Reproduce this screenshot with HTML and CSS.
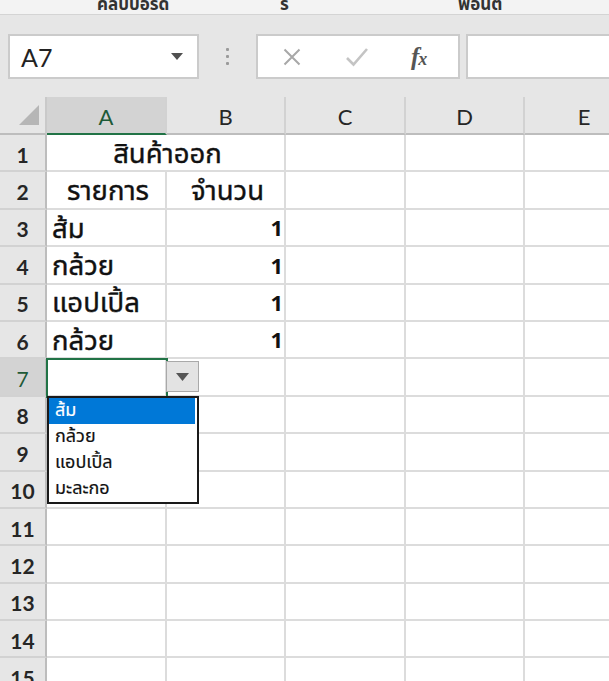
FILE: index.html
```html
<!DOCTYPE html>
<html lang="th">
<head>
<meta charset="utf-8">
<link rel="stylesheet" href="styles.css">
</head>
<body>
<div class="app">
  <div class="ribbon">
    <span class="grp g1">คลิปบอร์ด</span>
    <span class="grp g2">ร</span>
    <span class="grp g3">ฟอนต์</span>
  </div>
  <div class="fbar">
    <div class="namebox">
      <span class="ref">A7</span>
      <svg class="caret" width="12" height="7" viewBox="0 0 12 7"><path d="M0 0H12L6 7Z" fill="#505050"/></svg>
    </div>
    <div class="dots"><i></i><i></i><i></i></div>
    <div class="fbtns">
      <svg class="ic-x" width="18" height="18" viewBox="0 0 18 18"><path d="M1.5 1.5L16.5 16.5M16.5 1.5L1.5 16.5" stroke="#a8a8a8" stroke-width="2" fill="none"/></svg>
      <svg class="ic-ok" width="24" height="20" viewBox="0 0 24 20"><path d="M2 11L8.5 17.5L22 2" stroke="#c4c4c4" stroke-width="2.6" fill="none"/></svg>
      <span class="fx">f<span class="x">x</span></span>
    </div>
    <div class="finput"></div>
  </div>
  <div class="sheet">
    <div class="grid">
      <div class="corner"><span class="tri"></span></div>
      <div class="ch sel">A</div>
      <div class="ch">B</div>
      <div class="ch">C</div>
      <div class="ch">D</div>
      <div class="ch">E</div>

      <div class="rh">1</div>
      <div class="c merged center">สินค้าออก</div>
      <div class="c"></div><div class="c"></div><div class="c"></div>

      <div class="rh">2</div>
      <div class="c center">รายการ</div>
      <div class="c center">จำนวน</div>
      <div class="c"></div><div class="c"></div><div class="c"></div>

      <div class="rh">3</div>
      <div class="c">ส้ม</div>
      <div class="c num">1</div>
      <div class="c"></div><div class="c"></div><div class="c"></div>

      <div class="rh">4</div>
      <div class="c">กล้วย</div>
      <div class="c num">1</div>
      <div class="c"></div><div class="c"></div><div class="c"></div>

      <div class="rh">5</div>
      <div class="c">แอปเปิ้ล</div>
      <div class="c num">1</div>
      <div class="c"></div><div class="c"></div><div class="c"></div>

      <div class="rh">6</div>
      <div class="c">กล้วย</div>
      <div class="c num">1</div>
      <div class="c"></div><div class="c"></div><div class="c"></div>

      <div class="rh sel">7</div>
      <div class="c active"></div>
      <div class="c"></div><div class="c"></div><div class="c"></div><div class="c"></div>

      <div class="rh">8</div>
      <div class="c"></div><div class="c"></div><div class="c"></div><div class="c"></div><div class="c"></div>
      <div class="rh">9</div>
      <div class="c"></div><div class="c"></div><div class="c"></div><div class="c"></div><div class="c"></div>
      <div class="rh">10</div>
      <div class="c"></div><div class="c"></div><div class="c"></div><div class="c"></div><div class="c"></div>
      <div class="rh">11</div>
      <div class="c"></div><div class="c"></div><div class="c"></div><div class="c"></div><div class="c"></div>
      <div class="rh">12</div>
      <div class="c"></div><div class="c"></div><div class="c"></div><div class="c"></div><div class="c"></div>
      <div class="rh">13</div>
      <div class="c"></div><div class="c"></div><div class="c"></div><div class="c"></div><div class="c"></div>
      <div class="rh">14</div>
      <div class="c"></div><div class="c"></div><div class="c"></div><div class="c"></div><div class="c"></div>
      <div class="rh">15</div>
      <div class="c"></div><div class="c"></div><div class="c"></div><div class="c"></div><div class="c"></div>
    </div>

    <div class="dd-btn"><svg width="13" height="8" viewBox="0 0 13 8"><path d="M0 0H13L6.5 8Z" fill="#555"/></svg></div>
    <ul class="dd-list">
      <li class="hi">ส้ม</li>
      <li>กล้วย</li>
      <li>แอปเปิ้ล</li>
      <li>มะละกอ</li>
    </ul>
  </div>
</div>
</body>
</html>
```

FILE: styles.css
```css
* { box-sizing: border-box; }
html, body { margin: 0; padding: 0; }
body {
  width: 609px;
  height: 681px;
  overflow: hidden;
  background: #e6e6e6;
  font-family: "Tahoma", "Leelawadee UI", "Noto Sans Thai", "DejaVu Sans", "Noto Sans", sans-serif;
}
.app { width: 609px; height: 681px; overflow: hidden; }

.ribbon {
  height: 15px;
  background: #f3f3f3;
  border-bottom: 1px solid #d4d4d4;
  overflow: hidden;
  display: flex;
  align-items: flex-start;
  padding-left: 97px;
}
.grp {
  font-size: 17px;
  line-height: 20px;
  margin-top: -5px;
  color: #333;
  font-weight: bold;
  white-space: nowrap;
}
.g1 { width: 183px; }
.g2 { width: 178px; }

.fbar {
  display: flex;
  align-items: stretch;
  height: 45px;
  margin-top: 19px;
  padding-left: 8px;
}
.namebox {
  width: 191px;
  background: #fff;
  border: 2px solid #cbcbcb;
  display: flex;
  align-items: center;
  justify-content: space-between;
  padding: 0 14px 0 11px;
}
.ref {
  font-family: "Lato", "Liberation Sans", sans-serif;
  font-size: 25px;
  color: #222;
}
.dots {
  width: 57px;
  display: flex;
  flex-direction: column;
  align-items: center;
  justify-content: center;
  gap: 4px;
}
.dots i {
  display: block;
  width: 3px;
  height: 3px;
  background: #9a9a9a;
  border-radius: 1px;
}
.fbtns {
  width: 204px;
  background: #fff;
  border: 2px solid #cbcbcb;
  display: flex;
  align-items: center;
  padding-left: 25px;
}
.ic-x { margin-right: 44px; }
.ic-ok { margin-right: 42px; }
.fx {
  font-family: "Liberation Serif", "DejaVu Serif", serif;
  font-style: italic;
  font-weight: bold;
  font-size: 25px;
  line-height: 1;
  color: #555;
}
.fx .x { font-size: 18px; margin-left: -1px; }
.finput {
  flex: 1;
  margin-left: 6px;
  margin-right: -20px;
  background: #fff;
  border: 2px solid #cbcbcb;
}

.sheet {
  position: relative;
  margin-top: 18px;
}
.grid {
  display: grid;
  grid-template-columns: 47px 120px 119px 120px 119px 120px;
  grid-template-rows: 38px;
  grid-auto-rows: 37.4px;
  background: #fff;
}
.corner {
  background: #e6e6e6;
  border-right: 2px solid #c9c9c9;
  border-bottom: 2px solid #bdbdbd;
  position: relative;
}
.tri {
  position: absolute;
  right: 6px;
  bottom: 8px;
  width: 0;
  height: 0;
  border-left: 20px solid transparent;
  border-bottom: 20px solid #b6b6b6;
}
.ch {
  background: #e6e6e6;
  border-right: 2px solid #d2d2d2;
  border-bottom: 2px solid #bdbdbd;
  font-family: "Lato", "Liberation Sans", sans-serif;
  font-size: 22px;
  color: #262626;
  display: flex;
  align-items: center;
  justify-content: center;
  padding-top: 2px;
}
.ch.sel {
  background: #d3d3d3;
  color: #1e5a37;
  border-bottom: 2px solid #217346;
}
.rh {
  background: #e6e6e6;
  border-right: 2px solid #bdbdbd;
  border-bottom: 2px solid #d2d2d2;
  font-family: "Lato", "Liberation Sans", sans-serif;
  font-size: 21px;
  font-weight: bold;
  color: #262626;
  display: flex;
  align-items: center;
  justify-content: center;
  padding-top: 3px;
}
.rh.sel {
  background: #d3d3d3;
  color: #1e5a37;
  font-weight: normal;
}
.c {
  border-right: 2px solid #dcdcdc;
  border-bottom: 2px solid #dcdcdc;
  font-size: 27.5px;
  font-weight: normal;
  line-height: 1;
  color: #111;
  display: flex;
  align-items: flex-end;
  padding: 0 1px 2px 5px;
  white-space: nowrap;
  -webkit-text-stroke: 0.4px #111;
}
.c.merged { grid-column: span 2; }
.c.center { justify-content: center; }
.c.num {
  justify-content: flex-end;
  font-size: 22px;
  font-weight: bold;
  padding-bottom: 4px;
  -webkit-text-stroke: 0;
}
.c.active {
  outline: 2px solid #217346;
  outline-offset: -1px;
  position: relative;
  z-index: 1;
}

.dd-btn {
  position: absolute;
  left: 166px;
  top: 264px;
  width: 33px;
  height: 31px;
  background: #e3e3e3;
  border: 1px solid #a9a9a9;
  display: flex;
  align-items: center;
  justify-content: center;
  z-index: 2;
}
.dd-list {
  position: absolute;
  left: 47px;
  top: 299px;
  width: 152px;
  margin: 0;
  padding: 0 2px 0 0;
  list-style: none;
  background: #fff;
  border: 2px solid #1a1a1a;
  z-index: 3;
}
.dd-list li {
  height: 26px;
  line-height: 26px;
  padding-left: 6px;
  font-size: 18px;
  color: #111;
  -webkit-text-stroke: 0.2px #111;
}
.dd-list li.hi {
  background: #0078d7;
  color: #fff;
  -webkit-text-stroke: 0.2px #fff;
}
```
